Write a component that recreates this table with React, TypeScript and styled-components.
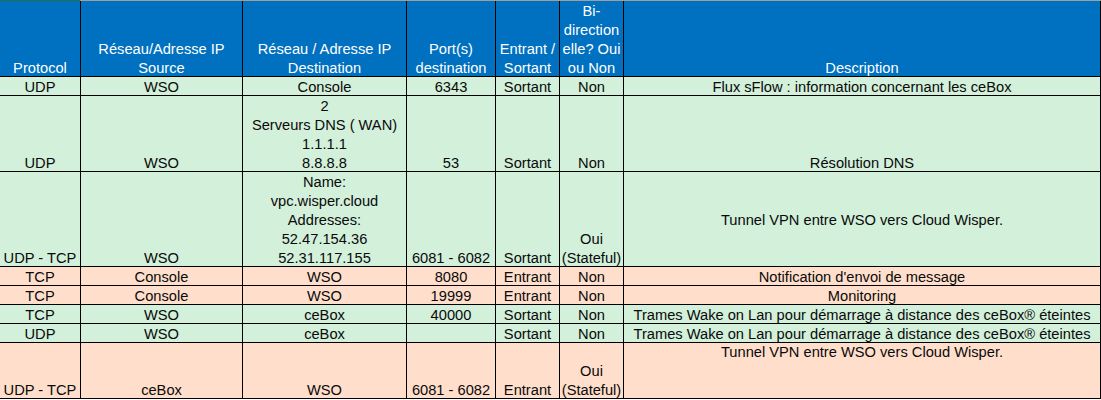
import React from "react";
import styled, { createGlobalStyle } from "styled-components";

const GlobalStyle = createGlobalStyle`
	html, body {
		margin: 0;
		padding: 0;
		background: #ffffff;
	}
	body {
		font-family: "Liberation Sans", Arial, sans-serif;
	}
`;

const BLUE = "#0070c0";
const GREEN = "#d2f0da";
const PEACH = "#ffdfcc";

type Tone = "green" | "peach";

const Page = styled.div`
	width: 1101px;
	height: 400px;
	overflow: hidden;
`;

const Strip = styled.div`
	display: flex;
	height: 1px;
	background: #9f9f9f;
`;

const StripMark = styled.div`
	width: 80px;
	background: #217346;
`;

const Sheet = styled.div`
	display: grid;
	grid-template-columns: 80px 161px 163px 88px 63px 63px 476px;
	grid-template-rows: 75px 18px 75px 94px 18px 18px 18px 18px 55px;
	gap: 1px;
	width: fit-content;
	padding: 0 1px 1px 0;
	background: #000000;
`;

const BaseCell = styled.div`
	display: flex;
	flex-direction: column;
	justify-content: flex-end;
	align-items: center;
	min-width: 0;
	font-size: 14.67px;
	line-height: 19px;
	text-align: center;
	white-space: nowrap;
`;

const HeaderCell = styled(BaseCell)`
	background: ${BLUE};
	color: #ffffff;
`;

const Cell = styled(BaseCell)<{ $tone: Tone }>`
	background: ${(p) => (p.$tone === "green" ? GREEN : PEACH)};
	color: #0a0a0a;
`;

const Lines = styled.div`
	display: flex;
	flex-direction: column;
	align-items: center;
	margin-bottom: -2px;
`;

const Line = styled.span`
	display: block;
	height: 19px;
`;

type Value = string | string[];

const headers: Value[] = [
	"Protocol",
	["Réseau/Adresse IP", "Source"],
	["Réseau / Adresse IP", "Destination"],
	["Port(s)", "destination"],
	["Entrant /", "Sortant"],
	["Bi-", "direction", "elle? Oui", "ou Non"],
	"Description",
];

const tunnel = ["Tunnel VPN entre WSO vers Cloud Wisper.", "", ""];
const wake = "Trames Wake on Lan pour démarrage à distance des ceBox® éteintes";

const rows: { tone: Tone; cells: Value[] }[] = [
	{
		tone: "green",
		cells: ["UDP", "WSO", "Console", "6343", "Sortant", "Non", "Flux sFlow : information concernant les ceBox"],
	},
	{
		tone: "green",
		cells: ["UDP", "WSO", ["2", "Serveurs DNS ( WAN)", "1.1.1.1", "8.8.8.8"], "53", "Sortant", "Non", "Résolution DNS"],
	},
	{
		tone: "green",
		cells: [
			"UDP - TCP",
			"WSO",
			["Name:", "vpc.wisper.cloud", "Addresses:", "52.47.154.36", "52.31.117.155"],
			"6081 - 6082",
			"Sortant",
			["Oui", "(Stateful)"],
			tunnel,
		],
	},
	{ tone: "peach", cells: ["TCP", "Console", "WSO", "8080", "Entrant", "Non", "Notification d'envoi de message"] },
	{ tone: "peach", cells: ["TCP", "Console", "WSO", "19999", "Entrant", "Non", "Monitoring"] },
	{ tone: "green", cells: ["TCP", "WSO", "ceBox", "40000", "Sortant", "Non", wake] },
	{ tone: "green", cells: ["UDP", "WSO", "ceBox", "", "Sortant", "Non", wake] },
	{
		tone: "peach",
		cells: ["UDP - TCP", "ceBox", "WSO", "6081 - 6082", "Entrant", ["Oui", "(Stateful)"], tunnel],
	},
];

function Text({ value }: { value: Value }) {
	const list = Array.isArray(value) ? value : [value];
	return (
		<Lines>
			{list.map((line, i) => (
				<Line key={i}>{line || "\u00a0"}</Line>
			))}
		</Lines>
	);
}

export default function App() {
	return (
		<Page>
			<GlobalStyle />
			<Strip>
				<StripMark />
			</Strip>
			<Sheet>
				{headers.map((h, i) => (
					<HeaderCell key={`h${i}`}>
						<Text value={h} />
					</HeaderCell>
				))}
				{rows.map((row, r) =>
					row.cells.map((c, i) => (
						<Cell key={`${r}-${i}`} $tone={row.tone}>
							<Text value={c} />
						</Cell>
					))
				)}
			</Sheet>
		</Page>
	);
}
